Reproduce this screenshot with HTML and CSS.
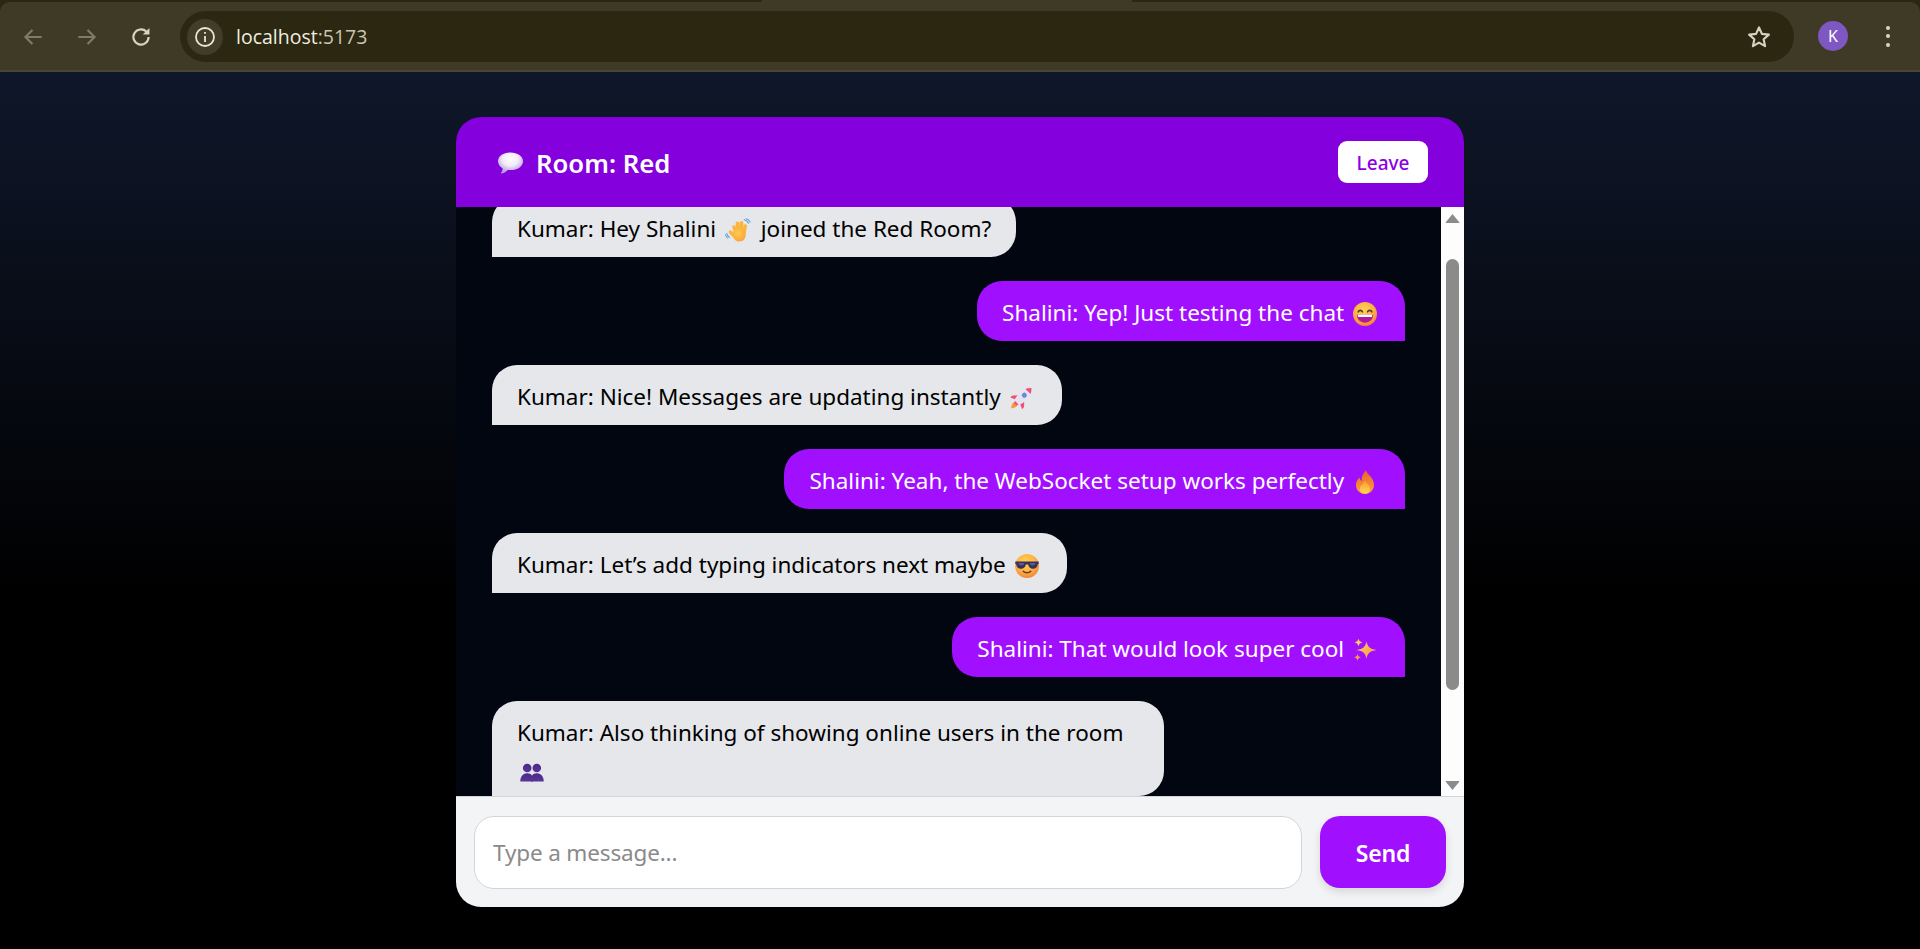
FILE: index.html
```html
<!DOCTYPE html>
<html lang="en">
<head>
<meta charset="utf-8">
<title>Chat Room</title>
<link rel="stylesheet" href="styles.css">
</head>
<body>
<svg class="defs" aria-hidden="true">
  <defs>
    <radialGradient id="gFace" cx="45%" cy="35%" r="70%"><stop offset="0" stop-color="#ffd45c"/><stop offset=".6" stop-color="#fdb03f"/><stop offset="1" stop-color="#f27a3c"/></radialGradient>
    <linearGradient id="gFire" x1="0" y1="0" x2="0" y2="1"><stop offset="0" stop-color="#e8612e"/><stop offset=".6" stop-color="#f58a30"/><stop offset="1" stop-color="#fca03a"/></linearGradient>
    <linearGradient id="gFlame" x1="0" y1="0" x2="0" y2="1"><stop offset="0" stop-color="#fb9a3a"/><stop offset="1" stop-color="#ffd94f"/></linearGradient>
    <linearGradient id="gSpark" x1="0" y1="0" x2="1" y2="1"><stop offset="0" stop-color="#ffd65a"/><stop offset="1" stop-color="#f9914a"/></linearGradient>
    <radialGradient id="gHand" cx="40%" cy="35%" r="75%"><stop offset="0" stop-color="#ffc94f"/><stop offset="1" stop-color="#f9a232"/></radialGradient>
    <radialGradient id="gBubble" cx="50%" cy="32%" r="62%"><stop offset="0" stop-color="#ffffff"/><stop offset=".5" stop-color="#f3ecfb"/><stop offset="1" stop-color="#b99fe0"/></radialGradient>
    <linearGradient id="gBust" x1="0" y1="0" x2="0" y2="1"><stop offset="0" stop-color="#4a2a86"/><stop offset="1" stop-color="#5a3499"/></linearGradient>
    <symbol id="e-balloon" viewBox="0 0 26 23"><path fill="url(#gBubble)" d="M13 .5C5.800.5.500 4.200.500 9.200c0 2.900 1.800 5.400 4.600 7 .1 1.700-.5 3.300-1.400 4.400-.3.400 0 .9.500.8 2.500-.4 4.600-1.700 5.900-3.500.9.100 1.900.2 2.900.2 7.200 0 12.500-3.700 12.500-8.900S20.200.5 13 .5z"/></symbol>
    <symbol id="e-wave" viewBox="0 0 27 24">
      <g transform="translate(1.500 .5)">
        <g fill="none" stroke="#fbb53c" stroke-linecap="round">
          <path stroke-width="3.600" d="M9.500 14 7.500 8.500"/>
          <path stroke-width="3.800" d="M12 13 11 5"/>
          <path stroke-width="3.800" d="M14.800 13 15 4.500"/>
          <path stroke-width="3.500" d="M17.500 14.500 18.800 7.500"/>
          <path stroke-width="3.300" d="M8 18 3.800 13.500"/>
        </g>
        <path fill="url(#gHand)" d="M6.500 15c0-3.200 2.500-5 6-5s6.700 1.500 6.700 5c0 2.800-.4 8-6.700 8-3.700 0-5-2-6-8z"/>
        <path fill="none" stroke="#5aa5dc" stroke-width="1.100" stroke-linecap="round" d="M17.700 1.200c1.900.3 3.500 1.700 4.200 3.600M19.700.3c1.700.4 3.100 1.500 3.900 3.100M.3 14.800c.2 1.700 1.100 3.200 2.600 4.200M-1 16c.2 1.300.9 2.500 1.900 3.400"/>
      </g>
    </symbol>
    <symbol id="e-grin" viewBox="0 0 24 24">
      <circle cx="12" cy="12" r="12" fill="url(#gFace)"/>
      <path fill="none" stroke="#5b3a2e" stroke-width="1.700" stroke-linecap="round" d="M5.200 9.800c.8-2 3.400-2 4.200 0M14.600 9.800c.8-2 3.400-2 4.200 0"/>
      <path fill="#b4189a" d="M3.800 12.600h16.400c0 4.800-3.600 8.200-8.200 8.200s-8.200-3.400-8.200-8.200z"/>
      <path fill="#fff" d="M4.600 12.600h14.800c0 1-.2 1.700-.5 2.300H5.100c-.3-.6-.5-1.300-.5-2.300z"/>
    </symbol>
    <symbol id="e-rocket" viewBox="0 0 24 24">
      <g transform="rotate(45 12 12)">
        <path fill="#f59a35" d="M9.500 20.500h5c.2 2.200-.8 4.500-2.500 6-1.700-1.500-2.700-3.800-2.500-6z"/>
        <path fill="#ee4f7c" d="M8.700 11.500 4.300 16c-.8.800-.9 2.200-.5 3.500l5.500-2.500zM15.300 11.500l4.400 4.500c.8.800.9 2.200.5 3.500L14.700 17z"/>
        <path fill="#e9e2ee" d="M12-2c3.600 3 5 7.500 5 11.500 0 3.800-.9 7.500-2.300 11H9.300C7.900 17 7 13.300 7 9.500 7 5.500 8.400 1 12-2z"/>
        <path fill="#ee4f7c" d="M12-2c1.600 1.300 2.800 3 3.600 4.800H8.400C9.200 1 10.400-.7 12-2zM9.600 18.700h4.800l-.5 2.300h-3.800z"/>
        <circle cx="12" cy="8" r="2.500" fill="#5d8fe0"/>
      </g>
    </symbol>
    <symbol id="e-fire" viewBox="0 0 24 24">
      <path fill="url(#gFire)" d="M13 .2c.9 4.200 8 7.200 8 14.700 0 5.200-4 8.900-9.200 8.900S3 20.100 3 15c0-3.400 1.700-5.500 3.600-7.400.2 1.800.9 2.900 2.200 3.400C8.300 7.200 9.900 3.200 13 .2z"/>
      <path fill="url(#gFlame)" d="M12.300 10.500c.7 2.700 4.700 4.500 4.700 8.500 0 2.900-2.200 4.800-5.200 4.800s-5-2-5-4.700c0-3.500 4-5.100 5.500-8.600z"/>
    </symbol>
    <symbol id="e-cool" viewBox="0 0 24 24">
      <circle cx="12" cy="12" r="12" fill="url(#gFace)"/>
      <path fill="#37325c" d="M.3 7.500h23.400v2.400h-.9c-.2 3-2 4.800-4.800 4.800-2.700 0-4.500-1.700-4.800-4.200h-2.400c-.3 2.500-2.100 4.200-4.800 4.200-2.800 0-4.600-1.800-4.800-4.800H.3z"/>
      <path fill="#5f5a94" d="M3.400 9h6c-.2 1.500-1.300 2.400-3 2.400-1.600 0-2.800-.9-3-2.400zM14.500 9h6c-.2 1.500-1.300 2.400-3 2.400-1.600 0-2.800-.9-3-2.400z"/>
      <path fill="none" stroke="#6b3a25" stroke-width="1.500" stroke-linecap="round" d="M8.200 17.300c2 2 5.600 2 7.600 0"/>
    </symbol>
    <symbol id="e-spark" viewBox="0 0 24 24">
      <path fill="url(#gSpark)" d="M13.500 3.500c1 5 3 7.400 10.300 8.500-7.300 1.100-9.300 3.500-10.300 8.800-1-5.300-3-7.700-10-8.800 7-1.100 9-3.500 10-8.500z"/>
      <path fill="#ffce55" d="M5.500 .5c.5 2.300 1.400 3.300 3.900 3.900-2.500.6-3.400 1.600-3.900 3.900-.5-2.300-1.400-3.300-3.900-3.900 2.500-.6 3.400-1.600 3.900-3.900z"/>
      <path fill="#f9a04a" d="M4.500 15.800c.4 2.200 1.200 3 3.400 3.500-2.200.5-3 1.300-3.400 3.700-.4-2.400-1.200-3.200-3.400-3.700 2.200-.5 3-1.300 3.400-3.500z"/>
    </symbol>
    <symbol id="e-busts" viewBox="0 0 24 24">
      <circle cx="7.200" cy="8" r="4.300" fill="url(#gBust)"/><circle cx="16.800" cy="8" r="4.300" fill="url(#gBust)"/>
      <path fill="url(#gBust)" d="M.3 21.500c0-4.400 2.200-8.200 6.900-8.200s5.800 3.500 5.800 8.200z"/>
      <path fill="url(#gBust)" d="M11 21.500c0-4.700 1.100-8.200 5.800-8.200s6.900 3.800 6.900 8.200z"/>
    </symbol>
  </defs>
</svg>

<header class="browser">
  <div class="browser-top"><span class="browser-tab"></span></div>
  <div class="toolbar">
    <span class="nav-btn nav-dim">
      <svg viewBox="0 0 24 24" class="nav-icon"><path d="M20 12H5M11.500 5.500 5 12l6.500 6.500"/></svg>
    </span>
    <span class="nav-btn nav-dim">
      <svg viewBox="0 0 24 24" class="nav-icon"><path d="M4 12h15M12.500 5.500 19 12l-6.500 6.500"/></svg>
    </span>
    <span class="nav-btn">
      <svg viewBox="0 0 24 24" class="nav-icon"><path d="M19 12a7 7 0 1 1-2.100-5"/><path class="nav-fill" d="M19.800 3.600v6.200h-6.200z"/></svg>
    </span>
    <div class="omnibox">
      <span class="info-chip">
        <svg viewBox="0 0 24 24" class="info-icon"><circle cx="12" cy="12" r="9"/><path d="M12 11v6M12 7v1.800"/></svg>
      </span>
      <span class="url"><span class="url-host">localhost</span>:5173</span>
      <svg viewBox="0 0 24 24" class="star-icon"><path d="m12 3.200 2.700 5.900 6.400.7-4.800 4.300 1.300 6.300-5.600-3.200-5.600 3.200 1.300-6.300-4.800-4.300 6.400-.7z"/></svg>
    </div>
    <span class="avatar">K</span>
    <span class="menu-dots"><i></i><i></i><i></i></span>
  </div>
</header>

<main class="page">
  <section class="card">
    <div class="card-head">
      <h1 class="room-title"><svg class="emoji-title"><use href="#e-balloon"/></svg><span>Room: Red</span></h1>
      <button class="leave">Leave</button>
    </div>
    <div class="card-body">
      <div class="messages">
        <div class="msg msg-in msg-first">Kumar: Hey Shalini <svg class="emoji emoji-wave"><use href="#e-wave"/></svg> joined the Red Room?</div>
        <div class="msg msg-out">Shalini: Yep! Just testing the chat <svg class="emoji"><use href="#e-grin"/></svg></div>
        <div class="msg msg-in">Kumar: Nice! Messages are updating instantly <svg class="emoji emoji-lg"><use href="#e-rocket"/></svg></div>
        <div class="msg msg-out">Shalini: Yeah, the WebSocket setup works perfectly <svg class="emoji"><use href="#e-fire"/></svg></div>
        <div class="msg msg-in">Kumar: Let’s add typing indicators next maybe <svg class="emoji"><use href="#e-cool"/></svg></div>
        <div class="msg msg-out">Shalini: That would look super cool <svg class="emoji"><use href="#e-spark"/></svg></div>
        <div class="msg msg-in msg-wrap">Kumar: Also thinking of showing online users in the room <svg class="emoji emoji-low"><use href="#e-busts"/></svg></div>
      </div>
      <div class="scrollbar">
        <svg viewBox="0 0 14 10" class="sb-arrow"><path d="M7 .8 13.300 8.500c.2.400 0 .7-.4.700H1.100c-.4 0-.6-.3-.4-.7z"/></svg>
        <div class="sb-track"><div class="sb-thumb"></div></div>
        <svg viewBox="0 0 14 10" class="sb-arrow"><path d="M7 9.200 13.300 1.500c.2-.4 0-.7-.4-.7H1.100c-.4 0-.6.300-.4.700z"/></svg>
      </div>
    </div>
    <form class="composer">
      <input class="composer-input" type="text" placeholder="Type a message...">
      <button class="send" type="button">Send</button>
    </form>
  </section>
</main>
</body>
</html>
```

FILE: styles.css
```css
* { box-sizing: border-box; }
html, body { height: 100%; }
body {
  margin: 0;
  display: flex;
  flex-direction: column;
  background: #000;
  font-family: "Noto Sans", "Open Sans", "Liberation Sans", sans-serif;
  overflow: hidden;
}
.defs { display: block; width: 0; height: 0; }

/* browser chrome */
.browser { flex: 0 0 72px; background: #2c2710; display: flex; flex-direction: column; }
.browser-top { flex: 0 0 2px; display: flex; justify-content: center; padding-right: 26px; }
.browser-tab { width: 370px; background: #3f3a26; }
.toolbar {
  flex: 1;
  display: flex;
  align-items: center;
  background: #3f3a26;
  border-radius: 10px 10px 0 0;
  border-bottom: 2px solid #4a4630;
  padding: 0 0 0 6px;
}
.nav-btn { flex: 0 0 54px; display: flex; justify-content: center; margin-top: 1px; }
.nav-icon { width: 26px; height: 26px; fill: none; stroke: #d9d6bd; stroke-width: 2; }
.nav-fill { fill: #d9d6bd; stroke: none; }
.nav-dim .nav-icon { stroke: #7f7b66; }
.omnibox {
  flex: 1;
  height: 51px;
  margin-left: 12px;
  margin-top: 1px;
  display: flex;
  align-items: center;
  background: #2c2710;
  border-radius: 26px;
  padding: 0 22px 0 7px;
}
.info-chip {
  width: 36px; height: 36px;
  border-radius: 50%;
  background: #423d28;
  display: flex; align-items: center; justify-content: center;
}
.info-icon { width: 24px; height: 24px; fill: none; stroke: #e8e5d0; stroke-width: 1.800; }
.url { flex: 1; margin-left: 13px; font-size: 19.500px; color: #c9c6b0; font-family: "Open Sans", "Noto Sans", sans-serif; }
.url-host { color: #f0eee0; }
.star-icon { width: 26px; height: 26px; fill: none; stroke: #d5d2c0; stroke-width: 2; stroke-linejoin: round; }
.avatar {
  width: 30px; height: 30px;
  margin-left: 24px;
  border-radius: 50%;
  background: #7e57c2;
  color: #fff;
  font-size: 16px;
  display: flex; align-items: center; justify-content: center;
}
.menu-dots { flex: 0 0 auto; margin: 0 30px 0 38px; display: flex; flex-direction: column; gap: 4.500px; }
.menu-dots i { display: block; width: 4px; height: 4px; border-radius: 50%; background: #d9d6bd; }

/* page */
.page {
  flex: 1;
  min-height: 0;
  display: flex;
  justify-content: center;
  padding: 45px 0 42px;
  background: linear-gradient(to bottom, #0f172a 0%, #000 60%);
}
.card {
  width: 1008px;
  display: flex;
  flex-direction: column;
  border-radius: 25px;
  overflow: hidden;
  background: #020611;
}
.card-head {
  flex: 0 0 90px;
  display: flex;
  align-items: center;
  justify-content: space-between;
  padding: 0 36px 0 41px;
  background: #8400dc;
}
.room-title {
  margin: 2px 0 0;
  display: flex;
  align-items: center;
  gap: 12px;
  font-size: 25.700px;
  font-weight: 600;
  color: #fff;
}
.leave {
  width: 90px;
  height: 42px;
  padding: 2px 0 0;
  border: 0;
  border-radius: 9px;
  background: #fff;
  color: #8b00e6;
  font: 500 19px "Noto Sans", sans-serif;
}
.card-body { flex: 1; min-height: 0; display: flex; }
.messages {
  flex: 1;
  min-width: 0;
  display: flex;
  flex-direction: column;
  align-items: flex-start;
  gap: 24px;
  padding: 0 36px;
  overflow: hidden;
  background: #020611;
}
.msg {
  flex: 0 0 auto;
  max-width: 672px;
  padding: 14px 25px 11px;
  font-size: 22.500px;
  line-height: 35px;
  border-radius: 25px;
}
.msg-in { background: #e5e7eb; color: #000; border-bottom-left-radius: 0; }
.msg-out { background: #a10fff; color: #fff; align-self: flex-end; border-bottom-right-radius: 0; }
.msg-first { margin-top: -10px; }
.emoji { display: inline-block; width: 24px; height: 24px; margin: 0 3px; vertical-align: -5px; }
.emoji-lg { width: 27px; margin: 0 1.500px; }
.emoji-wave { width: 27px; margin: 0 3px; }
.emoji-title { flex: 0 0 27px; width: 27px; height: 23px; }
.emoji-low { margin: 0 3px; vertical-align: -8px; }

/* scrollbar */
.scrollbar {
  flex: 0 0 23px;
  display: flex;
  flex-direction: column;
  align-items: center;
  background: #fdfdfd;
  padding: 6px 0 5px;
}
.sb-arrow { flex: 0 0 11px; width: 15px; height: 11px; fill: #8b8b8b; }
.sb-track { flex: 1; width: 100%; display: flex; flex-direction: column; padding-top: 35px; padding-bottom: 90px; align-items: center; }
.sb-thumb { flex: 1; width: 13px; border-radius: 7px; background: #8b8b8b; }

/* composer */
.composer {
  flex: 0 0 111px;
  display: flex;
  align-items: center;
  gap: 18px;
  padding: 0 18px;
  background: #f3f4f6;
  border-top: 1px solid #d1d5db;
}
.composer-input {
  flex: 1;
  min-width: 0;
  height: 73px;
  padding: 1px 18px 0;
  border: 1px solid #d1d5db;
  border-radius: 20px;
  background: #fff;
  font: 22.500px "Noto Sans", sans-serif;
  letter-spacing: -.15px;
  color: #000;
  outline: none;
}
.composer-input::placeholder { color: #8a8a8a; opacity: 1; }
.send {
  flex: 0 0 126px;
  height: 72px;
  padding: 2px 0 0;
  border: 0;
  border-radius: 20px;
  background: #a10fff;
  color: #fff;
  font: 600 23px "Noto Sans", sans-serif;
  letter-spacing: -.2px;
  box-shadow: 0 4px 8px rgba(0,0,0,.12);
}
```
